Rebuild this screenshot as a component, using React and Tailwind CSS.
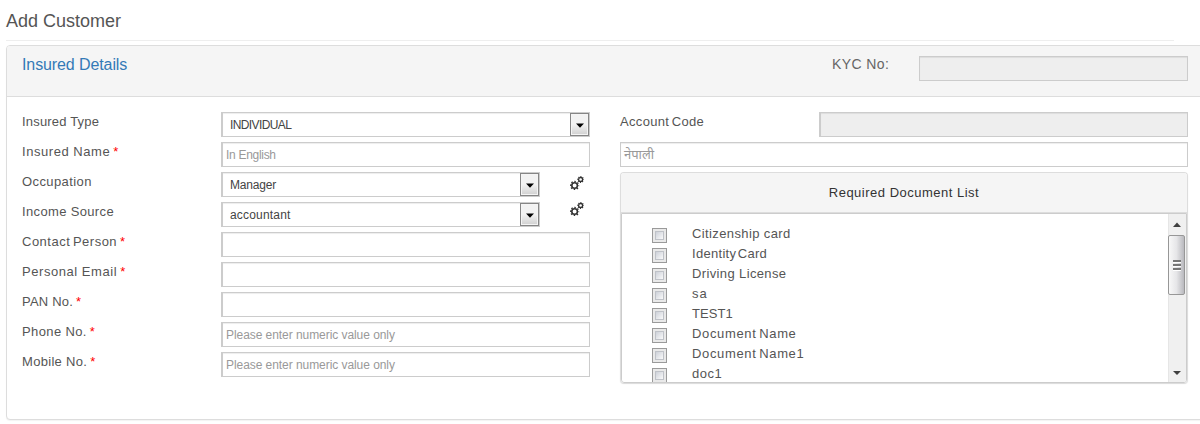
import React from "react";

const INSET = "shadow-[inset_0_1px_1px_rgba(0,0,0,0.075)]";

function Gears({ className }) {
  return (
    <svg viewBox="0 0 14 14" className={"block h-[14px] w-[14px] shrink-0 " + className} fill="none" stroke="#333">
      <circle cx="4.6" cy="9.5" r="2.8" strokeWidth="1.6" />
      <circle cx="4.6" cy="9.5" r="4" strokeWidth="1.4" strokeDasharray="1.5 1.642" strokeDashoffset="0.75" />
      <circle cx="10.6" cy="3.5" r="2" strokeWidth="1.3" />
      <circle cx="10.6" cy="3.5" r="2.9" strokeWidth="1.1" strokeDasharray="1.1 1.178" strokeDashoffset="0.55" />
    </svg>
  );
}

function SelectBox({ value, width, tracking }) {
  return (
    <div className={"flex h-[25px] shrink-0 items-center justify-between border border-l-2 border-[#ccc] bg-white pl-[7px] " + INSET + " " + width}>
      <span className={"text-[12px] leading-[24px] text-[#444] " + tracking}>{value}</span>
      <span className="flex h-[23px] w-[19px] items-center justify-center border border-[#858585] bg-linear-to-b from-[#f2f2f2] from-50% to-[#d0d0d0] shadow-[inset_0_0_0_1px_#f4f4f4]">
        <svg viewBox="0 0 8 5" className="mt-px h-[5px] w-[8px]"><path d="M0 0.5h8L4 4.7z" fill="#000" /></svg>
      </span>
    </div>
  );
}

function TextBox({ placeholder, tracking = "" }) {
  return (
    <div className={"h-[25px] w-[369px] shrink-0 border border-l-2 border-[#ccc] bg-white pl-[3px] text-[12px] leading-[24px] text-[#999] " + INSET}>
      <span className={"whitespace-nowrap " + tracking}>{placeholder}</span>
    </div>
  );
}

function Row({ label, tracking, required, children }) {
  return (
    <div className="flex h-[30px] items-start">
      <div className="w-[199px] shrink-0 text-[13px] leading-[20px] whitespace-nowrap text-[#555]">
        <span className={tracking}>{label}</span>
        {required && <span className="ml-[3px] text-[#f00]">*</span>}
      </div>
      {children}
    </div>
  );
}

const documents = [
  ["Citizenship card", "tracking-[0.38px]"],
  ["Identity Card", "tracking-[0.3px] [word-spacing:-2.5px]"],
  ["Driving License", "tracking-[0.37px]"],
  ["sa", "tracking-[1px]"],
  ["TEST1", "tracking-[0.1px]"],
  ["Document Name", "tracking-[0.65px] [word-spacing:-1.5px]"],
  ["Document Name1", "tracking-[0.65px] [word-spacing:-1.5px]"],
  ["doc1", "tracking-[0.5px]"],
];

function GripLine() {
  return <span className="h-[3px] w-[8px] border-b border-white bg-[#777]" />;
}

function Scrollbar() {
  return (
    <div className="flex h-full w-[18px] shrink-0 flex-col items-start border-l border-[#e6e6e6] bg-[#f0f0f0]">
      <svg viewBox="0 0 8 5" className="mt-[8px] ml-[4px] h-[5px] w-[8px] shrink-0"><path d="M0 5L4 0.5l4 4.5z" fill="#404040" /></svg>
      <div className="mt-[8px] -ml-px flex h-[60px] w-[17px] shrink-0 flex-col items-center justify-center gap-[1px] rounded-[2px] border border-[#979797] bg-linear-to-r from-[#f8f8f8] via-[#e6e6e8] to-[#b9b9be]">
        <GripLine />
        <GripLine />
        <GripLine />
      </div>
      <svg viewBox="0 0 8 4" className="mt-auto mb-[7px] ml-[4px] h-[4px] w-[8px] shrink-0"><path d="M0 0h8L4 4z" fill="#404040" /></svg>
    </div>
  );
}

export default function App() {
  return (
    <div className="h-[424px] w-[1200px] overflow-hidden bg-white pl-[6px] font-['Liberation_Sans',Arial,sans-serif]">
      <h1 className="h-[41px] w-[1168px] border-b border-[#eee] pt-[9px] text-[18px] leading-[24px] text-[#555]">Add Customer</h1>
      <section className="mt-[4px] h-[375px] w-[1210px] rounded-[4px] border border-[#ddd] bg-white shadow-[0_1px_1px_rgba(0,0,0,0.05)]">
        <header className="flex h-[51px] rounded-t-[3px] border-b border-[#ddd] bg-[#f5f5f5] pl-[15px]">
          <h2 className="w-[810px] pt-[8px] text-[16px] leading-[22px] tracking-[-0.1px] text-[#337ab7]">Insured Details</h2>
          <span className="w-[87px] pt-[8px] text-[14px] leading-[21px] tracking-[0.4px] text-[#666]">KYC No:</span>
          <div className={"mt-[10px] h-[25px] w-[269px] border border-[#ccc] bg-[#eee] " + INSET} />
        </header>
        <div className="flex pt-[15px] pl-[15px]">
          <div className="w-[598px] shrink-0">
            <Row label="Insured Type" tracking="tracking-[0.18px]"><SelectBox value="INDIVIDUAL" width="w-[369px]" tracking="tracking-[-0.6px]" /></Row>
            <Row label="Insured Name" tracking="tracking-[0.55px]" required><TextBox placeholder="In English" tracking="tracking-[-0.3px]" /></Row>
            <Row label="Occupation" tracking="tracking-[0.4px]"><SelectBox value="Manager" width="w-[319px]" tracking="tracking-[-0.2px]" /><Gears className="mt-[4px] ml-[30px]" /></Row>
            <Row label="Income Source" tracking="tracking-[0.35px]"><SelectBox value="accountant" width="w-[319px]" tracking="tracking-[0.18px]" /><Gears className="ml-[30px]" /></Row>
            <Row label="Contact Person" tracking="tracking-[0.5px] [word-spacing:-1.5px]" required><TextBox /></Row>
            <Row label="Personal Email" tracking="tracking-[0.55px]" required><TextBox /></Row>
            <Row label="PAN No." tracking="tracking-[0.2px]" required><TextBox /></Row>
            <Row label="Phone No." tracking="tracking-[0.38px]" required><TextBox placeholder="Please enter numeric value only" tracking="tracking-[-0.06px]" /></Row>
            <Row label="Mobile No." tracking="tracking-[0.3px]" required><TextBox placeholder="Please enter numeric value only" tracking="tracking-[-0.06px]" /></Row>
          </div>
          <div className="w-[568px] shrink-0">
            <Row label="Account Code" tracking="tracking-[0.33px] [word-spacing:-1.5px]"><div className={"h-[25px] w-[369px] border border-l-2 border-[#ccc] bg-[#eee] " + INSET} /></Row>
            <div className={"h-[25px] border border-[#ccc] pl-[3px] text-[13px] leading-[24px] text-[#999] " + INSET}>
              <span className="font-['Noto_Sans_Devanagari','Noto_Sans',sans-serif]">नेपाली</span>
            </div>
            <section className="mt-[5px] h-[211px] overflow-hidden rounded-[4px] border border-b-0 border-[#ddd] shadow-[0_1px_1px_rgba(0,0,0,0.15)]">
              <h3 className="h-[40px] border-b border-[#ddd] bg-[#f5f5f5] text-center text-[13px] leading-[39px] tracking-[0.5px] text-[#333]">Required Document List</h3>
              <div className="flex h-[170px] overflow-hidden rounded-b-[3px] border border-[#ccc]">
                <ul className="flex-1 pt-[10px] pl-[30px]">
                  {documents.map(([name, tracking]) => (
                    <li key={name} className="flex h-[20px] items-start">
                      <span className="mt-[4px] h-[15px] w-[15px] shrink-0 border border-[#9a9a9a] bg-[#e9e9e9] p-[2px]">
                        <span className="block h-[9px] w-[9px] border border-[#bfc2c8] bg-linear-to-br from-[#cdd1d9] to-[#fafafa]" />
                      </span>
                      <span className={"ml-[25px] text-[13px] leading-[20px] text-[#555] " + tracking}>{name}</span>
                    </li>
                  ))}
                </ul>
                <Scrollbar />
              </div>
            </section>
          </div>
        </div>
      </section>
    </div>
  );
}
